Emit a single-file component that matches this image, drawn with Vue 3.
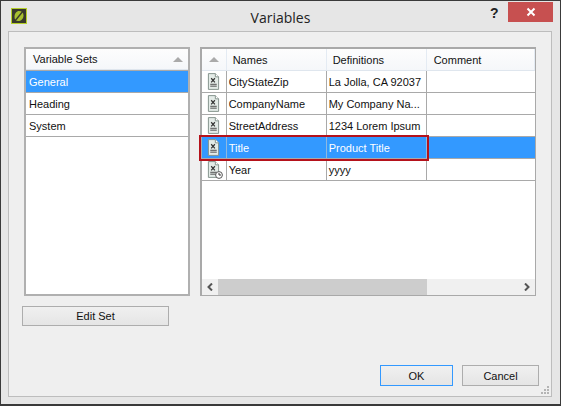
<template>
  <div class="window">
    <div class="titlebar">
      <svg class="app-icon" viewBox="0 0 16 16">
        <rect x="0.5" y="0.5" width="15" height="15" fill="#3a3a2c" stroke="#b5cf2a" />
        <path d="M8 3 C11 3 12.5 5 12.5 7.5 C12.5 11 10 13 7 13 C4.5 13 3.5 11 3.5 9 C3.5 5.5 5.5 3 8 3 Z" fill="#a8c030" />
        <path d="M3.5 13.5 L12.5 2.5" stroke="#3a3a2c" stroke-width="1.4" />
      </svg>
      <span class="title">Variables</span>
      <span class="help">?</span>
      <button class="close">
        <svg viewBox="0 0 10 10" width="10" height="10">
          <path d="M1.5 1.5 L8.5 8.5 M8.5 1.5 L1.5 8.5" stroke="#fff" stroke-width="2" />
        </svg>
      </button>
    </div>

    <div class="body">
      <div class="panes">
        <div class="left-col">
          <div class="sets">
            <div class="sets-head">
              <span>Variable Sets</span>
              <i class="sort-arrow"></i>
            </div>
            <div
              v-for="(s, i) in sets"
              :key="s"
              class="set-row"
              :class="{ selected: i === 0 }"
            >{{ s }}</div>
          </div>
          <button class="btn edit-set">Edit Set</button>
        </div>

        <div class="vars">
          <div class="vars-scroll">
            <div class="vars-head">
              <div class="cell icon-cell"><i class="sort-arrow"></i></div>
              <div class="cell names">Names</div>
              <div class="cell defs">Definitions</div>
              <div class="cell comment">Comment</div>
            </div>
            <div
              v-for="v in variables"
              :key="v.name"
              class="var-row"
              :class="{ selected: v.selected }"
            >
              <div class="cell icon-cell">
                <svg width="13" height="17" viewBox="0 0 14 18" class="doc-icon">
                  <path d="M1.5 0.5 H9 L12.5 4 V17.5 H1.5 Z" fill="#e4ece8" stroke="#7f8f88" />
                  <path d="M9 0.5 V4 H12.5" fill="#fff" stroke="#7f8f88" />
                  <path d="M4.5 5.5 L8.5 10 M8.5 5.5 L4.5 10" stroke="#333" stroke-width="1.3" />
                  <path d="M3.5 12 H10.5 M3.5 14 H10.5" stroke="#444" />
                </svg>
                <svg v-if="v.clock" width="8" height="8" viewBox="0 0 8 8" class="clock">
                  <circle cx="4" cy="4" r="3.4" fill="#fff" stroke="#555" />
                  <path d="M4 2 V4 H6" fill="none" stroke="#333" />
                </svg>
              </div>
              <div class="cell names">{{ v.name }}</div>
              <div class="cell defs">{{ v.def }}</div>
              <div class="cell comment"></div>
            </div>
            <div class="highlight"></div>
          </div>
          <div class="hscroll">
            <svg class="arrow" width="7" height="8" viewBox="0 0 7 8">
              <path d="M5.5 0.5 L2 4 L5.5 7.5" fill="none" stroke="#555" stroke-width="2" />
            </svg>
            <div class="thumb"></div>
            <svg class="arrow" width="7" height="8" viewBox="0 0 7 8">
              <path d="M1.5 0.5 L5 4 L1.5 7.5" fill="none" stroke="#555" stroke-width="2" />
            </svg>
          </div>
        </div>
      </div>

      <div class="actions">
        <button class="btn ok">OK</button>
        <button class="btn cancel">Cancel</button>
      </div>
      <svg class="grip" width="9" height="9" viewBox="0 0 9 9" fill="#b4b4b4">
        <rect x="6" y="0" width="2" height="2" />
        <rect x="3" y="3" width="2" height="2" />
        <rect x="6" y="3" width="2" height="2" />
        <rect x="0" y="6" width="2" height="2" />
        <rect x="3" y="6" width="2" height="2" />
        <rect x="6" y="6" width="2" height="2" />
      </svg>
    </div>
  </div>
</template>

<script setup>
const sets = ['General', 'Heading', 'System']

const variables = [
  { name: 'CityStateZip', def: 'La Jolla, CA 92037' },
  { name: 'CompanyName', def: 'My Company Na...' },
  { name: 'StreetAddress', def: '1234 Lorem Ipsum' },
  { name: 'Title', def: 'Product Title', selected: true },
  { name: 'Year', def: 'yyyy', clock: true }
]
</script>

<style>
html, body {
  margin: 0;
  padding: 0;
}
</style>

<style scoped>
.window {
  box-sizing: border-box;
  width: 561px;
  height: 406px;
  display: flex;
  flex-direction: column;
  background: #e6e6e6;
  border: 1px solid #3a3a3a;
  border-bottom-width: 2px;
  font-family: "Liberation Sans", Arial, sans-serif;
  font-size: 11px;
  color: #111;
  overflow: hidden;
}

.titlebar {
  height: 30px;
  flex-shrink: 0;
  display: flex;
  align-items: flex-start;
  position: relative;
}

.app-icon {
  width: 16px;
  height: 16px;
  margin: 7px 0 0 10px;
}

.title {
  position: absolute;
  left: 0;
  right: 0;
  top: 7px;
  text-align: center;
  font-family: "Open Sans", sans-serif;
  font-size: 14px;
  line-height: 20px;
  color: #222;
}

.help {
  position: absolute;
  left: 489px;
  top: 4px;
  font-size: 14px;
  line-height: 16px;
  font-weight: 700;
  color: #222;
}

.close {
  position: absolute;
  left: 507px;
  top: 1px;
  width: 45px;
  height: 20px;
  padding: 0;
  border: 0;
  background: #c75050;
  display: flex;
  align-items: center;
  justify-content: center;
}

.body {
  flex: 1;
  position: relative;
  margin: 0 8px 7px 7px;
  padding: 15px 15px 0 15px;
  background: #efefef;
  border: 1px solid #bdbdbd;
  display: flex;
  flex-direction: column;
}

.panes {
  display: flex;
  gap: 10px;
}

.left-col {
  width: 166px;
  display: flex;
  flex-direction: column;
}

.sets {
  height: 249px;
  box-sizing: border-box;
  background: #fff;
  border: 2px solid #b0b0b0;
}

.sets-head,
.vars-head {
  height: 22px;
  box-sizing: border-box;
  background: linear-gradient(#fdfdfd, #f5f7fa);
  border-bottom: 1px solid #dfe6ee;
  display: flex;
  align-items: center;
}

.sets-head {
  height: 21px;
  padding: 0 5px 0 7px;
  justify-content: space-between;
}

.sort-arrow {
  width: 0;
  height: 0;
  border-left: 5px solid transparent;
  border-right: 5px solid transparent;
  border-bottom: 5px solid #aaa;
}

.set-row {
  height: 23px;
  box-sizing: border-box;
  line-height: 22px;
  padding-left: 3px;
  border-top: 1px solid #a9a9a9;
  border-bottom: 1px solid #a9a9a9;
  margin-bottom: -1px;
}

.set-row.selected {
  background: #3399ff;
  color: #fff;
}

.edit-set {
  margin: 10px 0 0 -2px;
  width: 147px;
  height: 20px;
}

.btn {
  box-sizing: border-box;
  padding: 0;
  border: 1px solid #adadad;
  background: linear-gradient(#f0f0f0, #e5e5e5);
  font-family: inherit;
  font-size: 11px;
  color: #111;
}

.vars {
  width: 337px;
  height: 249px;
  box-sizing: border-box;
  background: #fff;
  border: 1px solid #a9a9a9;
  border-top-width: 2px;
  border-left-width: 2px;
  display: flex;
  flex-direction: column;
}

.vars-scroll {
  flex: 1;
  position: relative;
}

.vars-head .cell {
  border-right: 1px solid #e4ebf3;
}

.cell {
  height: 100%;
  box-sizing: border-box;
  display: flex;
  align-items: center;
  flex-shrink: 0;
  white-space: nowrap;
  overflow: hidden;
  border-right: 1px solid #a9a9a9;
}

.icon-cell {
  width: 25px;
  justify-content: center;
  position: relative;
}

.names {
  width: 100px;
  padding-left: 2px;
}

.defs {
  width: 100px;
  padding-left: 2px;
}

.comment {
  flex: 1;
  padding-left: 7px;
  border-right: 0;
}

.vars-head .names,
.vars-head .defs {
  padding-left: 6px;
}

.var-row {
  height: 22px;
  box-sizing: border-box;
  display: flex;
  border-bottom: 1px solid #a9a9a9;
}

.var-row.selected {
  background: #3399ff;
  color: #fff;
}

.var-row.selected .cell {
  border-right-color: #8fb8df;
}

.clock {
  position: absolute;
  right: 3px;
  bottom: 1px;
}

.highlight {
  position: absolute;
  left: -3px;
  top: 86px;
  width: 230px;
  height: 26px;
  box-sizing: border-box;
  border: 2px solid #b5121b;
  pointer-events: none;
}

.hscroll {
  height: 16px;
  flex-shrink: 0;
  display: flex;
  align-items: center;
  background: #f0f0f0;
}

.hscroll .arrow {
  width: 16px;
  flex-shrink: 0;
}

.thumb {
  width: 209px;
  height: 100%;
  background: #cdcdcd;
  margin-right: auto;
}

.actions {
  margin-top: auto;
  margin-bottom: 10px;
  margin-right: -3px;
  display: flex;
  justify-content: flex-end;
  gap: 9px;
}

.ok {
  width: 73px;
  height: 21px;
  border-color: #3399ff;
}

.cancel {
  width: 77px;
  height: 21px;
}

.grip {
  position: absolute;
  right: 1px;
  bottom: 1px;
}
</style>
